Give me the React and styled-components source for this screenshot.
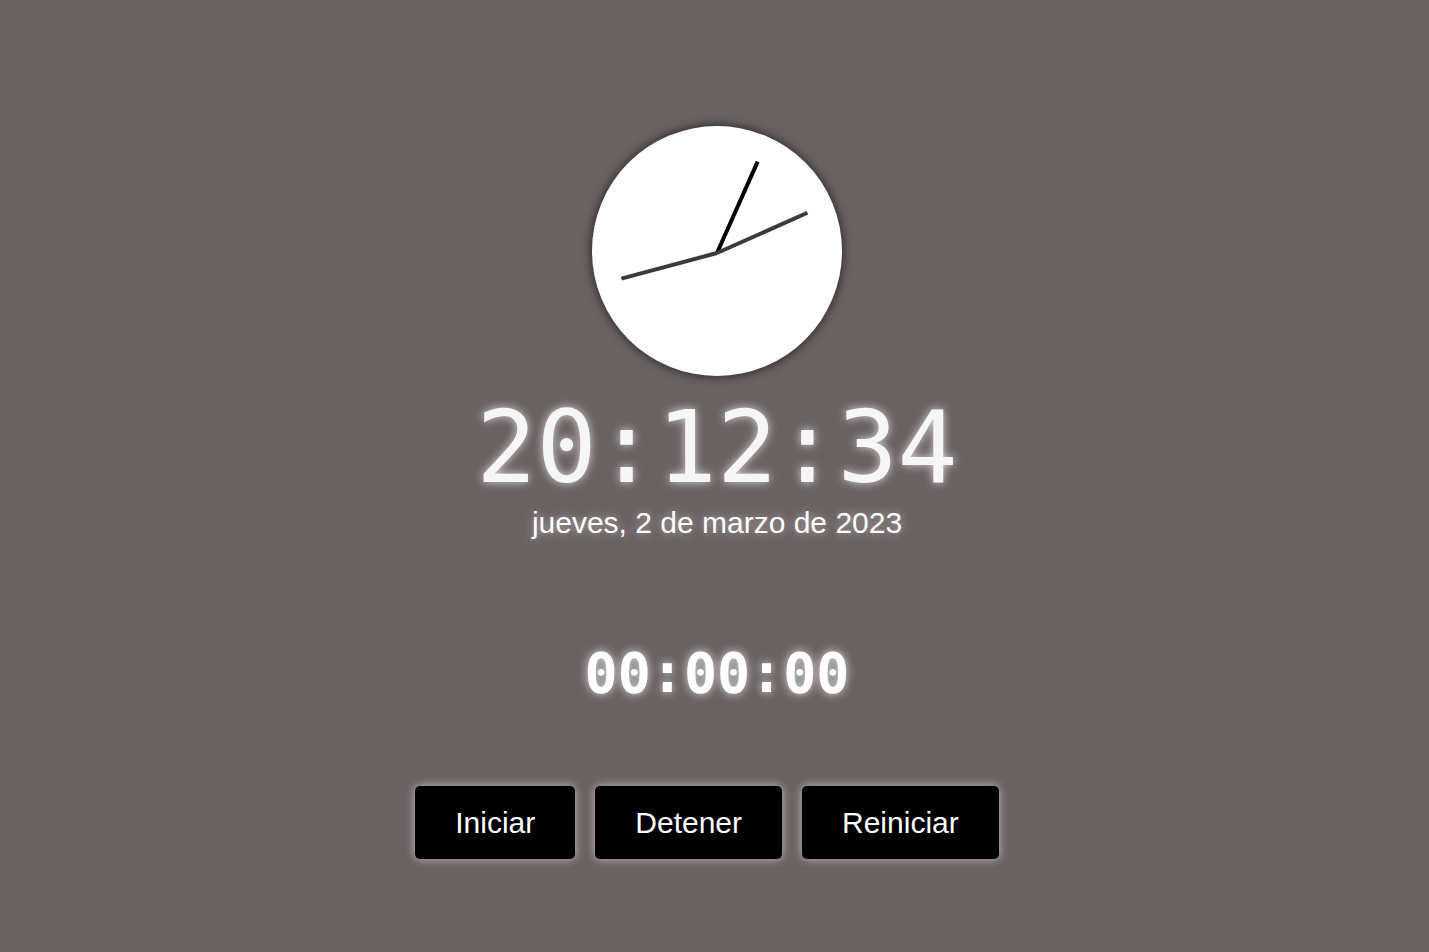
import React from "react";
import styled, { createGlobalStyle } from "styled-components";

const GlobalStyle = createGlobalStyle`
  html, body {
    margin: 0;
    padding: 0;
    background: #6a6162;
    font-family: "Liberation Sans", Arial, sans-serif;
  }
`;

const Page = styled.div`
  min-height: 952px;
  display: flex;
  flex-direction: column;
  align-items: center;
  padding: 126px 0 0 5px;
  box-sizing: border-box;
`;

const Face = styled.div`
  position: relative;
  width: 250px;
  height: 250px;
  border-radius: 50%;
  background: #fff;
  box-shadow: 0 0 8px 2px rgba(0, 0, 0, 0.5);
`;

const Hand = styled.div`
  position: absolute;
  left: 123px;
  bottom: 123px;
  width: 4px;
  height: ${(p) => p.$length}px;
  background: ${(p) => p.$color};
  transform-origin: 50% 100%;
`;

const Time = styled.div`
  margin-top: 17px;
  font-family: "DejaVu Sans Mono", monospace;
  font-size: 100px;
  line-height: 110px;
  color: #f6f6f6;
  text-shadow: 0 0 10px rgba(255, 255, 255, 0.75);
`;

const DateLine = styled.div`
  margin-top: 2px;
  font-size: 30px;
  line-height: 36px;
  color: #fff;
  text-shadow: 0 0 10px rgba(255, 255, 255, 0.5);
`;

const Stopwatch = styled.div`
  margin-top: 100px;
  font-family: "DejaVu Sans Mono", monospace;
  font-weight: bold;
  font-size: 55px;
  line-height: 64px;
  color: #fff;
  text-shadow: 0 0 10px rgba(255, 255, 255, 0.8);
`;

const Buttons = styled.div`
  margin: 81px 20px 0 0;
  display: flex;
  gap: 20px;
`;

const Button = styled.button`
  height: 73px;
  padding: 0 40px;
  border: none;
  border-radius: 5px;
  background: #000;
  color: #fff;
  font-family: "Liberation Sans", Arial, sans-serif;
  font-size: 30px;
  box-shadow: 0 0 10px rgba(255, 255, 255, 0.6);
  cursor: pointer;
`;

const hands = [
  { angle: 24, length: 100, color: "#000" },
  { angle: 66, length: 99, color: "#3b3b3b" },
  { angle: 255, length: 99, color: "#3b3b3b" },
];

export default function App() {
  return (
    <>
      <GlobalStyle />
      <Page>
        <Face>
          {hands.map((h, i) => (
            <Hand
              key={i}
              $length={h.length}
              $color={h.color}
              style={{ transform: `rotate(${h.angle}deg)` }}
            />
          ))}
        </Face>
        <Time>20:12:34</Time>
        <DateLine>jueves, 2 de marzo de 2023</DateLine>
        <Stopwatch>00:00:00</Stopwatch>
        <Buttons>
          <Button>Iniciar</Button>
          <Button>Detener</Button>
          <Button>Reiniciar</Button>
        </Buttons>
      </Page>
    </>
  );
}
